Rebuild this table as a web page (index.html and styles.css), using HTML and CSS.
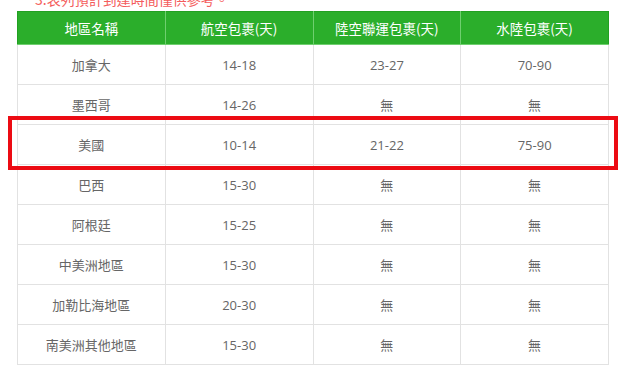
FILE: index.html
```html
<!DOCTYPE html>
<html lang="zh-Hant">
<head>
<meta charset="utf-8">
<title>預計到達時間</title>
<link rel="stylesheet" href="styles.css">
</head>
<body>
<div class="page">
  <p class="note">3.表列預計到達時間僅供參考。</p>
  <div class="table-wrap">
    <table class="ship">
      <thead>
        <tr><th>地區名稱</th><th>航空包裹(天)</th><th>陸空聯運包裹(天)</th><th>水陸包裹(天)</th></tr>
      </thead>
      <tbody>
        <tr><td>加拿大</td><td>14-18</td><td>23-27</td><td>70-90</td></tr>
        <tr><td>墨西哥</td><td>14-26</td><td>無</td><td>無</td></tr>
        <tr class="hl"><td>美國</td><td>10-14</td><td>21-22</td><td>75-90</td></tr>
        <tr><td>巴西</td><td>15-30</td><td>無</td><td>無</td></tr>
        <tr><td>阿根廷</td><td>15-25</td><td>無</td><td>無</td></tr>
        <tr><td>中美洲地區</td><td>15-30</td><td>無</td><td>無</td></tr>
        <tr><td>加勒比海地區</td><td>20-30</td><td>無</td><td>無</td></tr>
        <tr><td>南美洲其他地區</td><td>15-30</td><td>無</td><td>無</td></tr>
      </tbody>
    </table>
    <div class="mark"></div>
  </div>
</div>
</body>
</html>
```
FILE: styles.css
```css
html, body {
  margin: 0;
  padding: 0;
  background: #ffffff;
}
.page {
  padding-left: 17px;
  font-family: "Open Sans", "Noto Sans CJK TC", sans-serif;
}
.note {
  margin: -10px 0 0 18px;
  height: 21px;
  line-height: 18px;
  font-size: 14px;
  color: #f45c5c;
  font-family: "Noto Sans CJK TC", sans-serif;
}
.table-wrap {
  position: relative;
  width: 592px;
}
.ship {
  width: 592px;
  table-layout: fixed;
  border-collapse: collapse;
  font-size: 13px;
  color: #666666;
  text-align: center;
}
.ship th {
  height: 32px;
  padding: 0;
  background: #2bae2b;
  color: #ffffff;
  font-weight: normal;
  font-size: 13.5px;
  font-family: "Noto Sans CJK TC", sans-serif;
  border: 1px solid #6fcf6f;
  border-top-color: #22a022;
}
.ship th:first-child { border-left-color: #22a022; }
.ship th:last-child { border-right-color: #22a022; }
.ship td {
  height: 39px;
  padding: 0;
  border: 1px solid #e2e2e2;
}
.ship td:first-child {
  font-family: "Noto Sans CJK TC", sans-serif;
  font-size: 13px;
}
.mark {
  position: absolute;
  left: -9px;
  top: 105px;
  width: 602px;
  height: 46px;
  border: 4px solid #ec0b13;
}
```
